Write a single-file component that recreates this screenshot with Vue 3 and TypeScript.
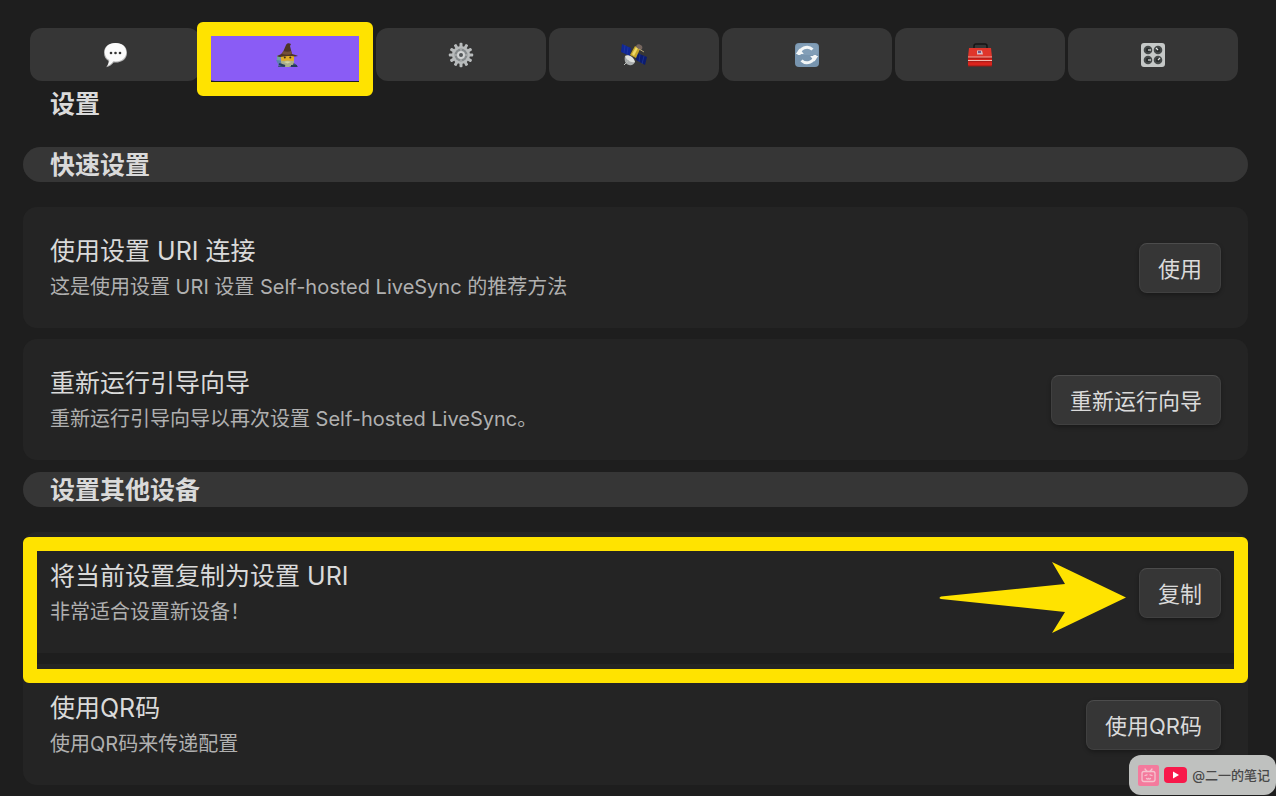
<script setup lang="ts">
import { ref } from 'vue'

interface Tab {
  id: string
  label: string
}
interface Setting {
  title: string
  description: string
  action: string
  highlighted?: boolean
}
interface Section {
  heading: string
  items: Setting[]
}

const tabs: Tab[] = [
  { id: 'info', label: '信息' },
  { id: 'wizard', label: '设置' },
  { id: 'general', label: '常规' },
  { id: 'remote', label: '远程' },
  { id: 'sync', label: '同步' },
  { id: 'tools', label: '工具' },
  { id: 'advanced', label: '高级' },
]
const active = ref('wizard')
const knobs = [
  { x: 8, y: 8, dx: 3, dy: 0 },
  { x: 18, y: 8, dx: -2, dy: -2 },
  { x: 8, y: 18, dx: 3, dy: 0 },
  { x: 18, y: 18, dx: 2, dy: -2 },
]

const sections: Section[] = [
  {
    heading: '快速设置',
    items: [
      {
        title: '使用设置 URI 连接',
        description: '这是使用设置 URI 设置 Self-hosted LiveSync 的推荐方法',
        action: '使用',
      },
      {
        title: '重新运行引导向导',
        description: '重新运行引导向导以再次设置 Self-hosted LiveSync。',
        action: '重新运行向导',
      },
    ],
  },
  {
    heading: '设置其他设备',
    items: [
      {
        title: '将当前设置复制为设置 URI',
        description: '非常适合设置新设备！',
        action: '复制',
        highlighted: true,
      },
      { title: '使用QR码', description: '使用QR码来传递配置', action: '使用QR码' },
    ],
  },
]
</script>

<template>
  <main class="page">
    <nav class="tabs">
      <button
        v-for="tab in tabs"
        :key="tab.id"
        type="button"
        class="tab"
        :class="{ active: tab.id === active }"
        :aria-label="tab.label"
        @click="active = tab.id"
      >
        <svg v-if="tab.id === 'info'" class="icon" viewBox="0 0 26 26">
          <path d="M13.5 1C6.500 1 2 4.800 2 10.700c0 3.800 1.700 6.600 4.500 8.200 0 2.500-1 4.600-2.400 6.300 3.300-.6 6-2.500 7.500-4.700.6.100 1.300.1 1.900.1C20.500 20.600 25 16.800 25 10.800S20.500 1 13.500 1Z" fill="#b5b5b5" />
          <path d="M13.500 1C6.800 1 2.800 4.800 2.800 10.300c0 3.800 1.700 6.300 4.500 7.700 0 2.300-.8 4.300-2 5.900 2.600-.8 4.600-2.400 5.900-4.600 8 1 13-3.100 13-9C24.200 4.800 20.200 1 13.500 1Z" fill="#fbfbfb" />
          <g fill="#333"><circle cx="9" cy="11" r="1.300" /><circle cx="13.500" cy="11" r="1.300" /><circle cx="18" cy="11" r="1.300" /></g>
        </svg>

        <svg v-else-if="tab.id === 'wizard'" class="icon" viewBox="0 0 26 26">
          <path d="M3 25c1-4 4-5 9-5s9 1 11 5Z" fill="#38516f" />
          <path d="M2 14c2-1 4 0 4 2l-1 2 4 3-1 3-6-4Z" fill="#6fa39b" />
          <path d="M1 18l7 1 2 4-6 1Z" fill="#5b7fb0" />
          <path d="M6 13h13v5c0 4-3 6-6.500 6S6 22 6 18Z" fill="#e0ad28" />
          <path d="M6 18.500c2 1 4 0 6.500 0s5 1 6.500 0c0 4-2 6.500-6.500 6.500S6 22.500 6 18.500Z" fill="#a9b08b" />
          <path d="M9 20c2-1 5-1 7 0l-3.500 1.500Z" fill="#d5d3a0" />
          <circle cx="9.800" cy="15.500" r="1" fill="#40301b" /><circle cx="15.300" cy="15.500" r="1" fill="#40301b" />
          <path d="M2 14c2-1 5-2 6-4l3-7c1-2 3-2 5-1l-1 2 2 8c2 1 5 1 6 2-3 1-6 0-10 0-5 0-8 2-11 0Z" fill="#4d3527" />
          <path d="M8 9c3 1 6 1 8 0l1 3c-3 1-7 1-10 0Z" fill="#745039" />
          <path d="M4 22l6 2M16 24l6 0" stroke="#263b5a" stroke-width="2" />
        </svg>

        <svg v-else-if="tab.id === 'general'" class="icon" viewBox="0 0 26 26">
          <g fill="#b8bbbc">
            <rect v-for="n in 12" :key="n" x="11.500" y="0.800" width="3" height="5" rx="1" :transform="`rotate(${n * 30} 13 13)`" />
          </g>
          <circle cx="13" cy="13" r="9" fill="#b8bbbc" />
          <circle cx="13" cy="13" r="6.500" fill="#858a8c" />
          <path d="M13 6.500v4M13 15.500v4M6.500 13h4M15.500 13h4" stroke="#a9acad" stroke-width="1.500" />
          <circle cx="13" cy="13" r="4" fill="#d1d3d4" />
          <circle cx="13" cy="13" r="2" fill="#505456" />
        </svg>

        <svg v-else-if="tab.id === 'remote'" class="icon" viewBox="0 0 26 26">
          <path d="M1 2l9 4-1 8-9-4Z" fill="#102795" />
          <path d="M16 11l10 4-2 8-9-5Z" fill="#0b1c70" />
          <path d="M4 3L3 11M7 5l-1 8M19 12l-1 8M23 14l-2 8" stroke="#2c46a4" stroke-width="0.500" />
          <path d="M9 13l5-9 5 3-4 9Z" fill="#c5a62a" />
          <path d="M11 12l4-7 2 1-4 8Z" fill="#f0d967" />
          <path d="M15 5c0-3 3-4 6-1 1 2 0 4-2 4Z" fill="#76665e" />
          <path d="M4 14c-1 4 0 8 4 9 3 1 5-1 6-3Z" fill="#a9adad" />
          <path d="M4 14c3-2 9 1 10 6-4 1-8-1-10-6Z" fill="#e1e3df" />
          <path d="M8 18l-5 5" stroke="#b8bdb9" />
          <path d="M18 7l5 3" stroke="#b2a171" />
        </svg>

        <svg v-else-if="tab.id === 'sync'" class="icon" viewBox="0 0 26 26">
          <rect x="1" y="1" width="24" height="24" rx="4" fill="#7895af" />
          <rect x="2" y="2" width="22" height="11" rx="3" fill="#829eb7" />
          <path d="M5 13a8 8 0 0 1 13.500-5.500M21 13A8 8 0 0 1 7.500 18.500" fill="none" stroke="#f3f6f7" stroke-width="3" />
          <path d="M1.800 12h8L5.500 6.500ZM24.200 14h-8l4.300 5.500Z" fill="#f3f6f7" />
        </svg>

        <svg v-else-if="tab.id === 'tools'" class="icon" viewBox="0 0 26 26">
          <path d="M7 6V4q0-2 2-2h9q2 0 2 2v2" fill="none" stroke="#151515" stroke-width="1.500" />
          <path d="M2 6h22l1 9H1Z" fill="#e0352b" />
          <rect x="1" y="14" width="24" height="10" rx="1" fill="#dc241d" />
          <path d="M1 15h24M1 18.500h24" stroke="#f4b9b0" stroke-width="1.200" />
          <path d="M1 16.200h24M1 19.700h24" stroke="#8b1714" stroke-width="0.700" />
          <path d="M10 8.500h5l1 4h-6Z" fill="#d5bbc2" />
          <path d="M11 9h3v2h-3Z" fill="#705a8b" />
          <path d="M1 24h24" stroke="#951a17" />
        </svg>

        <svg v-else class="icon" viewBox="0 0 26 26">
          <rect x="1" y="1" width="24" height="24" rx="3" fill="#c5c8c7" />
          <g v-for="(k, i) in knobs" :key="i">
            <circle :cx="k.x" :cy="k.y" r="4.300" fill="#454949" />
            <circle :cx="k.x" :cy="k.y" r="2.200" fill="#292d2d" />
            <path :d="`M${k.x} ${k.y}l${k.dx} ${k.dy}`" stroke="#e2e4e3" stroke-width="1.200" />
          </g>
        </svg>
      </button>
    </nav>

    <h1 class="heading">设置</h1>

    <section v-for="section in sections" :key="section.heading" class="section">
      <h2 class="heading bar">{{ section.heading }}</h2>
      <div class="cards">
        <article v-for="item in section.items" :key="item.title" class="card" :class="{ highlighted: item.highlighted }">
          <div class="text">
            <h3 class="title">{{ item.title }}</h3>
            <p class="description">{{ item.description }}</p>
          </div>
          <svg v-if="item.highlighted" class="arrow" viewBox="0 0 188 72">
            <path d="M2 34.500 126 22 113 0 187 35.500 113 71 126 50 2 37Q-1 36 2 34.500Z" fill="#ffe300" />
          </svg>
          <button type="button" class="action">{{ item.action }}</button>
        </article>
      </div>
    </section>

    <footer class="badge">
      <svg class="bili" viewBox="0 0 21 21">
        <rect width="21" height="21" rx="2" fill="#f47a9d" />
        <g fill="none" stroke="#f5c3cf" stroke-width="1.300" stroke-linecap="round">
          <rect x="4" y="6.500" width="13" height="10" rx="2" />
          <path d="M7 4l2 2.500M14 4l-2 2.500M7 10.500l2-.7M14 10.500l-2-.7M8.500 13.500q1 1 2 0 1 1 2 0" />
        </g>
      </svg>
      <svg class="tube" viewBox="0 0 23 16">
        <rect width="23" height="16" rx="4" fill="#f8184a" />
        <path d="M9 4.500v7l6-3.500Z" fill="#fff" />
      </svg>
      <span class="handle">@二一的笔记</span>
    </footer>
  </main>
</template>

<style>
body {
  margin: 0;
  background: #1e1e1e;
}
</style>

<style scoped>
.page {
  box-sizing: border-box;
  min-height: 100vh;
  padding: 28px 28px 11px 23px;
  background: #1e1e1e;
  color: #dadada;
  font-family: Inter, "Noto Sans CJK SC", sans-serif;
}
.tabs {
  display: flex;
  gap: 3px;
  margin: 0 10px 0 7px;
}
.tab {
  position: relative;
  display: flex;
  flex: 1;
  align-items: center;
  justify-content: center;
  height: 53px;
  padding: 0;
  border: 0;
  border-radius: 12px;
  background: #363636;
}
.tab.active {
  background: #8a5cf5;
}
.tab.active::after {
  content: "";
  position: absolute;
  inset: -6px 0 -15px -6px;
  border: 14px solid #ffe300;
  border-radius: 6px;
}
.icon {
  width: 26px;
  height: 26px;
}
.heading {
  margin: 0;
  padding: 2px 27px 0;
  font-size: 25px;
  line-height: 33px;
  font-weight: 700;
}
h1.heading {
  margin: 5px 0 26px;
}
.bar {
  border-radius: 18px;
  background: #363636;
}
.section + .section {
  margin-top: 12px;
}
.cards {
  display: grid;
  gap: 11px;
  margin-top: 25px;
}
.card {
  position: relative;
  display: flex;
  align-items: center;
  justify-content: space-between;
  gap: 24px;
  padding: 0 27px;
  border-radius: 14px;
  background: #242424;
}
.text {
  padding: 26px 0 23px;
}
.title,
.description {
  margin: 0;
  font-weight: 400;
}
.title {
  font-size: 25px;
  line-height: 36px;
}
.description {
  font-size: 20px;
  line-height: 36px;
  color: #b0b0b0;
}
.action {
  height: 50px;
  padding: 0 18px 2px;
  border: 1px solid #404040;
  border-top-color: #4c4c4c;
  border-radius: 8px;
  background: #363636;
  box-shadow: 0 2px 4px rgba(0, 0, 0, 0.3);
  color: #dadada;
  font-family: inherit;
  font-size: 22px;
}
.highlighted {
  z-index: 1;
}
.highlighted::after {
  content: "";
  position: absolute;
  inset: 5px 0 -30px;
  border: 14px solid #ffe300;
  border-radius: 6px;
  pointer-events: none;
}
.arrow {
  position: absolute;
  top: 30px;
  right: 121px;
  width: 188px;
  height: 72px;
}
.badge {
  position: fixed;
  right: 0;
  bottom: 1px;
  z-index: 2;
  display: flex;
  align-items: center;
  gap: 5px;
  height: 40px;
  padding: 0 6px 0 9px;
  border-radius: 12px;
  background: #bfc1bf;
  color: #484848;
  font-size: 13px;
  font-weight: 500;
}
.handle {
  padding-bottom: 2px;
}
.bili {
  width: 21px;
  height: 21px;
}
.tube {
  width: 23px;
  height: 16px;
}
</style>
